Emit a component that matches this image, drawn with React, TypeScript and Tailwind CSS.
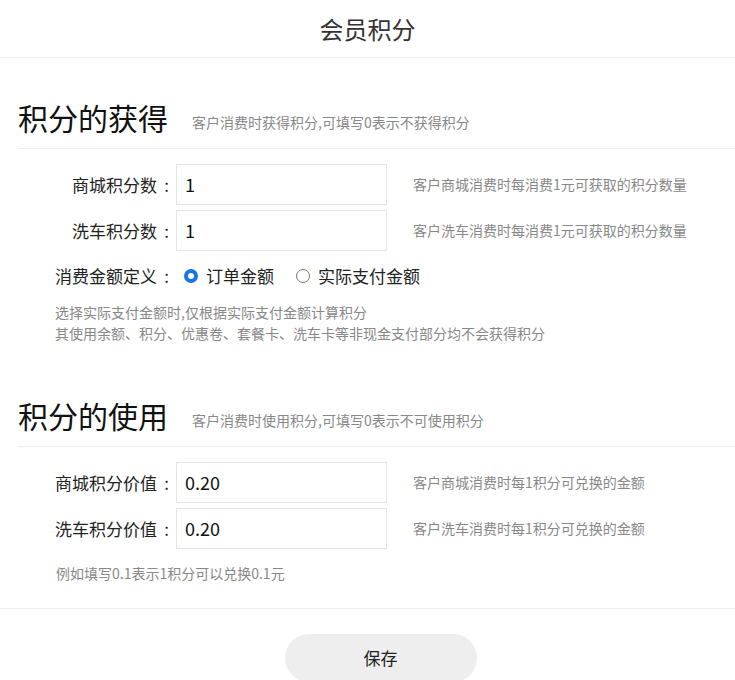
export default function App() {
  const f = { fontFamily: '"Microsoft YaHei","Noto Sans CJK SC",sans-serif' };
  const Label = ({ label }: { label: string }) => (
    <div className="w-[176px] flex justify-end items-center text-[17px] text-[#222]">
      <span>{label}</span>
      <span className="w-[19px] text-center">:</span>
    </div>
  );
  const Row = ({ label, value, help }: { label: string; value: string; help: string }) => (
    <div className="flex items-center h-[41px] mb-[5px]">
      <Label label={label} />
      <div className="w-[211px] h-[41px] border border-[#e5e5e5] flex items-center px-[8px] text-[18px] text-[#111]">{value}</div>
      <div className="ml-[26px] text-[14px] text-[#888]">{help}</div>
    </div>
  );
  const Title = ({ t, s }: { t: string; s: string }) => (
    <div className="ml-[18px] flex items-end border-b border-[#eee] pb-[12px]">
      <span className="text-[30px] leading-[38px] text-[#111]">{t}</span>
      <span className="ml-[24px] text-[14px] text-[#888] mb-[3px]">{s}</span>
    </div>
  );
  return (
    <div style={f} className="w-[735px] h-[680px] overflow-hidden bg-white">
      <div className="h-[58px] border-b border-[#eee] flex items-center justify-center text-[24px] text-[#333]">会员积分</div>
      <div className="pt-[40px]"><Title t="积分的获得" s="客户消费时获得积分,可填写0表示不获得积分" /></div>
      <div className="pt-[15px]">
        <Row label="商城积分数" value="1" help="客户商城消费时每消费1元可获取的积分数量" />
        <Row label="洗车积分数" value="1" help="客户洗车消费时每消费1元可获取的积分数量" />
        <div className="flex items-center h-[40px] text-[17px] text-[#222]">
          <Label label="消费金额定义" />
          <span className="ml-[8px] w-[14px] h-[14px] rounded-full border-[4px] border-[#1a73e8] bg-white mr-[8px]" />
          <span>订单金额</span>
          <span className="ml-[22px] w-[14px] h-[14px] rounded-full border border-[#777] mr-[8px]" />
          <span>实际支付金额</span>
        </div>
        <div className="ml-[55px] mt-[6px] text-[14px] leading-[21px] text-[#888]">
          <div>选择实际支付金额时,仅根据实际支付金额计算积分</div>
          <div>其使用余额、积分、优惠卷、套餐卡、洗车卡等非现金支付部分均不会获得积分</div>
        </div>
      </div>
      <div className="pt-[52px]"><Title t="积分的使用" s="客户消费时使用积分,可填写0表示不可使用积分" /></div>
      <div className="pt-[15px]">
        <Row label="商城积分价值" value="0.20" help="客户商城消费时每1积分可兑换的金额" />
        <Row label="洗车积分价值" value="0.20" help="客户洗车消费时每1积分可兑换的金额" />
        <div className="ml-[56px] mt-[14px] text-[14px] text-[#888]">例如填写0.1表示1积分可以兑换0.1元</div>
      </div>
      <div className="mt-[24px] border-t border-[#eee] flex justify-center pt-[25px]">
        <button className="ml-[26px] w-[192px] h-[48px] rounded-full bg-[#eee] text-[17px] text-[#222]">保存</button>
      </div>
    </div>
  );
}
